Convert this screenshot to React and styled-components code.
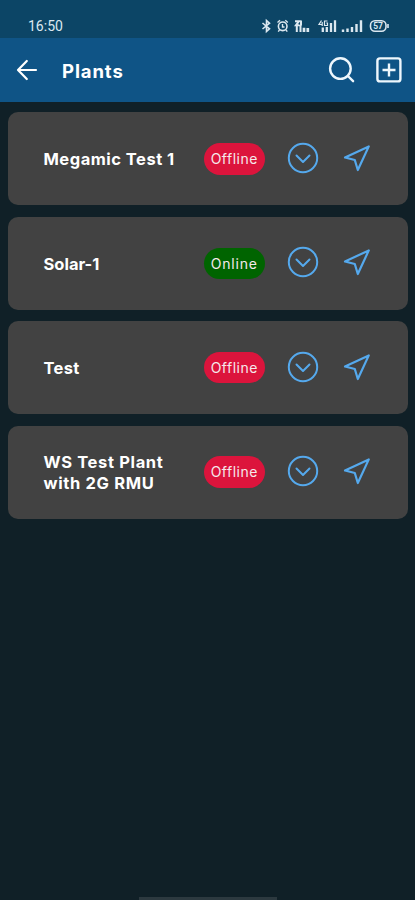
import styled, { createGlobalStyle } from "styled-components";

const plants = [
  { name: "Megamic Test 1", online: false, spacing: 0.5 },
  { name: "Solar-1", online: true, spacing: 0 },
  { name: "Test", online: false, spacing: 0.3 },
  { name: "WS Test Plant with 2G RMU", online: false, spacing: 0.65 },
];

const StatusIcons = () => (
  <svg width="130" height="16" viewBox="260 18 130 16" fill="none" stroke="#dce8f0">
    <path d="M262.5 23l7 5.8-3 2.6V20.6l3 2.6-7 5.8" strokeWidth="1.6" />
    <circle cx="282.7" cy="26.3" r="4.3" strokeWidth="1.6" />
    <path d="M282.5 24v3h2M277.5 22.5l2.5-2.2M285.3 20.3l2.5 2.2M279.5 30l-1.3 1.6M286 30l1.3 1.6" strokeWidth="1.4" />
    <path d="M295 21.2h4l-3 4h3.5M301 20.5v5M296.8 26v6M300.5 25v7" strokeWidth="2" />
    <path d="M304 27.8v4.2M307.8 28v4" strokeWidth="2.7" />
    <path d="M321.5 20.5l-2.5 4h3.5M322.2 22v4M327.5 21h-3v4.5h3v-2.5h-1.2" strokeWidth="1.2" />
    <path d="M322.8 27.5v4.5M326.8 27v5M331 23v9M335 20.3v11.7" strokeWidth="2.3" />
    <path d="M343 29.5v2.5M347.5 28.5v3.5M352 27v5M356.5 24v8M361 20.3v11.7" strokeWidth="2.4" />
    <rect x="370.5" y="20.8" width="15.5" height="10.4" rx="4.5" strokeWidth="1.6" />
    <path d="M388 24v4" strokeWidth="1.6" />
    <text x="373.2" y="29.2" fill="#dce8f0" stroke="none" fontFamily="Roboto, sans-serif" fontSize="8.5" fontWeight="700">57</text>
  </svg>
);

const BackIcon = () => (
  <svg width="22" height="22" viewBox="0 0 22 22" fill="none" stroke="#fff" strokeWidth="2.2" strokeLinecap="round" strokeLinejoin="round">
    <path d="M10.8 2L2 11l8.8 9M2.3 11H20" />
  </svg>
);

const SearchIcon = () => (
  <svg width="28" height="28" viewBox="0 0 28 28" fill="none" stroke="#eef7fd" strokeWidth="2.4" strokeLinecap="round">
    <circle cx="12.4" cy="12.6" r="10.3" />
    <path d="M19.9 20l5.2 5.2" />
  </svg>
);

const AddIcon = () => (
  <svg width="28" height="28" viewBox="0 0 28 28" fill="none" stroke="#eef7fd" strokeWidth="2.4">
    <rect x="2.4" y="2.4" width="23" height="23" rx="2.5" />
    <path d="M14 7.5v13M7.5 14h13" />
  </svg>
);

const ExpandIcon = () => (
  <svg width="32" height="32" viewBox="0 0 32 32" fill="none" stroke="#55a9ed" strokeWidth="2" strokeLinecap="round" strokeLinejoin="round">
    <circle cx="16" cy="16" r="14.2" />
    <path d="M9.5 13.5l6.5 6.5 6.5-6.5" />
  </svg>
);

const NavigateIcon = () => (
  <svg width="28" height="28" viewBox="0 0 28 28" fill="none" stroke="#55a9ed" strokeWidth="2.2" strokeLinejoin="round">
    <path d="M25.8 2.4L2 13.5l9.8 2.5 3 10z" />
  </svg>
);

const App = () => (
  <Screen>
    <GlobalStyle />
    <StatusBar>
      <Clock>16:50</Clock>
      <StatusIcons />
    </StatusBar>
    <Header>
      <IconButton aria-label="Back">
        <BackIcon />
      </IconButton>
      <Title>Plants</Title>
      <HeaderActions>
        <IconButton aria-label="Search">
          <SearchIcon />
        </IconButton>
        <IconButton aria-label="Add plant">
          <AddIcon />
        </IconButton>
      </HeaderActions>
    </Header>
    <PlantList>
      {plants.map((plant) => (
        <PlantCard key={plant.name}>
          <PlantName $spacing={plant.spacing}>{plant.name}</PlantName>
          <Badge $online={plant.online}>
            {plant.online ? "Online" : "Offline"}
          </Badge>
          <CardActions>
            <IconButton aria-label="Expand">
              <ExpandIcon />
            </IconButton>
            <IconButton aria-label="Navigate">
              <NavigateIcon />
            </IconButton>
          </CardActions>
        </PlantCard>
      ))}
    </PlantList>
    <HomeIndicator />
  </Screen>
);

export default App;

const GlobalStyle = createGlobalStyle`
  * {
    box-sizing: border-box;
  }

  body {
    margin: 0;
    background: #102027;
  }
`;

const Screen = styled.div`
  display: flex;
  flex-direction: column;
  width: 415px;
  height: 900px;
  overflow: hidden;
  background: #102027;
  color: #fff;
  font-family: Inter, sans-serif;
`;

const StatusBar = styled.div`
  display: flex;
  flex-shrink: 0;
  align-items: flex-start;
  justify-content: space-between;
  height: 38px;
  padding: 18px 25px 0 28px;
  background: #0c4566;
`;

const Clock = styled.span`
  color: #dce8f0;
  font-family: Roboto, sans-serif;
  font-size: 14px;
  line-height: 17px;
`;

const Header = styled.header`
  display: flex;
  flex-shrink: 0;
  align-items: center;
  height: 64px;
  padding: 0 12px 0 16px;
  background: #0f5486;
`;

const IconButton = styled.button`
  display: flex;
  padding: 0;
  border: none;
  background: none;
  cursor: pointer;
`;

const Title = styled.h1`
  margin: 2px 0 0 24px;
  font-size: 18.5px;
  font-weight: 700;
  letter-spacing: 0.9px;
`;

const HeaderActions = styled.div`
  display: flex;
  gap: 19px;
  margin-left: auto;
`;

const PlantList = styled.main`
  display: flex;
  flex: 1;
  flex-direction: column;
  gap: 11.4px;
  padding: 10.4px 7px 0 7.5px;
`;

const PlantCard = styled.section`
  display: flex;
  align-items: center;
  height: 93px;
  padding: 0 37px 0 36px;
  border-radius: 10px;
  background: #424242;
`;

const PlantName = styled.h2`
  width: 142px;
  margin: 1.5px 18px 0 0;
  font-size: 16.5px;
  font-weight: 700;
  line-height: 20.5px;
  letter-spacing: ${(props) => props.$spacing}px;
`;

const Badge = styled.span`
  width: 61.5px;
  height: 31.5px;
  border-radius: 16px;
  background: ${(props) => (props.$online ? "#006400" : "#dc143c")};
  color: #f5e9eb;
  font-size: 14px;
  line-height: 32px;
  letter-spacing: ${(props) => (props.$online ? 0.8 : 0.5)}px;
  text-align: center;
`;

const CardActions = styled.div`
  display: flex;
  gap: 24px;
  align-items: center;
  margin: 0 0 1.6px auto;
`;

const HomeIndicator = styled.div`
  flex-shrink: 0;
  align-self: center;
  width: 138px;
  height: 3px;
  background: #2c393f;
`;
